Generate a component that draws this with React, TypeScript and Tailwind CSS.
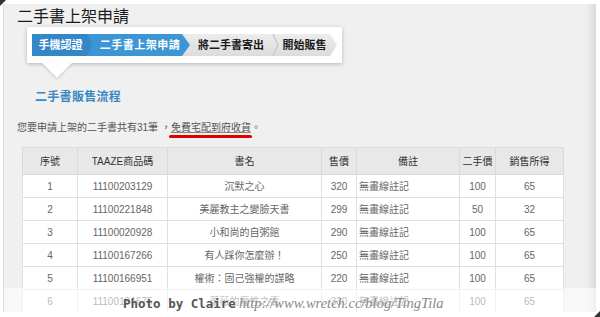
const rows = [
  { no: 1, code: '11100203129', title: '沉默之心', price: 320, note: '無畫線註記', used: 100, income: 65 },
  { no: 2, code: '11100221848', title: '美麗教主之變臉天書', price: 299, note: '無畫線註記', used: 50, income: 32 },
  { no: 3, code: '11100020928', title: '小和尚的自粥館', price: 290, note: '無畫線註記', used: 100, income: 65 },
  { no: 4, code: '11100167266', title: '有人踩你怎麼辦！', price: 250, note: '無畫線註記', used: 100, income: 65 },
  { no: 5, code: '11100166951', title: '權術：固己強權的謀略', price: 220, note: '無畫線註記', used: 100, income: 65 },
  { no: 6, code: '11100194675', title: '薔薇的魔性之毒', price: 330, note: '無畫線註記', used: 100, income: 65 },
]

const font = { fontFamily: '"Liberation Sans", "Noto Sans CJK TC", sans-serif' }

export default function App() {
  return (
    <div className="relative w-[600px] h-[317px] overflow-hidden bg-white" style={font}>
      {/* photo frame corners */}
      <div className="absolute left-0 top-0 w-0 h-0 border-t-[6px] border-r-[6px] border-t-[#333] border-r-transparent z-20" />
      <div className="absolute right-0 bottom-0 w-0 h-0 border-b-[6px] border-l-[6px] border-b-[#333] border-l-transparent z-20" />

      <div className="relative ml-[3px] mt-[4px] w-[593px] h-[308px] overflow-hidden bg-[#f0f0f0] border-l border-[#dcdcdc]">
        {/* right edge shade */}
        <div className="absolute right-0 top-0 bottom-0 w-[10px] bg-gradient-to-r from-[#f0f0f0] to-[#dadada]" />

        <div className="mt-[2px] ml-[13px] h-[21px] leading-[21px] text-[16px] text-[#1a1a1a]">二手書上架申請</div>

        {/* steps card */}
        <div className="relative ml-[23px] w-[315px] h-[36px] bg-white px-[5px] pt-[7px] shadow-[0_1px_4px_rgba(0,0,0,0.25)]">
          <div className="flex h-[22px] w-[305px] bg-gradient-to-b from-[#ececec] to-[#dcdcdc] [clip-path:polygon(0_0,calc(100%_-_7px)_0,100%_50%,calc(100%_-_7px)_100%,0_100%)]">
            <div className="flex w-[158px] bg-[#3c95d4] [clip-path:polygon(0_0,calc(100%_-_8px)_0,100%_50%,calc(100%_-_8px)_100%,0_100%)]">
              <div className="w-[60px] h-full bg-[#3487c7] flex items-center justify-center pr-[3px] text-[11px] font-bold text-white [clip-path:polygon(0_0,calc(100%_-_5px)_0,100%_50%,calc(100%_-_5px)_100%,0_100%)]">
                手機認證
              </div>
              <div className="flex-1 flex items-center justify-center pr-[2px] text-[11px] font-bold text-white tracking-[0.5px]">
                二手書上架申請
              </div>
            </div>
            <div className="w-[82px] flex items-center justify-center text-[11px] font-bold text-[#1a1a1a]">將二手書寄出</div>
            <svg width="7" height="22" viewBox="0 0 7 22" className="shrink-0">
              <polyline points="1,0 6,11 1,22" fill="none" stroke="#bdbdbd" strokeWidth="1" />
            </svg>
            <div className="flex-1 flex items-center justify-center pr-[7px] text-[11px] font-bold text-[#1a1a1a]">開始販售</div>
          </div>
          <svg width="30" height="17" viewBox="0 0 30 17" className="absolute left-[15px] top-full drop-shadow-[0_1px_1px_rgba(0,0,0,0.2)]">
            <polygon points="0,0 30,0 15,15" fill="white" />
          </svg>
        </div>

        <div className="mt-[26px] ml-[31px] h-[16px] leading-[16px] text-[12px] font-bold tracking-[0.3px] text-[#3a88c2]">二手書販售流程</div>

        <div className="mt-[16px] ml-[13px] h-[14px] leading-[14px] text-[10px] text-[#555]">
          您要申請上架的二手書共有31筆 ，
          <span className="relative underline decoration-[#888]">
            免費宅配到府收貨
            <span className="absolute left-[-2px] right-[-1px] bottom-[-5px] h-[3px] rounded-full bg-[#e00000]" />
          </span>
          。
        </div>

        <table className="mt-[12px] ml-[18px] w-[541px] table-fixed border-collapse text-[10px]">
          <colgroup>
            <col className="w-[55px]" />
            <col className="w-[90px]" />
            <col className="w-[154px]" />
            <col className="w-[35px]" />
            <col className="w-[103px]" />
            <col className="w-[36px]" />
            <col className="w-[68px]" />
          </colgroup>
          <thead>
            <tr className="h-[27px] bg-[#e8e8e8] text-[#333]">
              {['序號', 'TAAZE商品碼', '書名', '售價', '備註', '二手價', '銷售所得'].map((h) => (
                <th key={h} className="border border-[#dadada] font-normal text-center">{h}</th>
              ))}
            </tr>
          </thead>
          <tbody>
            {rows.map((r) => (
              <tr key={r.no} className="h-[23px] bg-white text-[#666]">
                <td className="border border-[#e0e0e0] text-center">{r.no}</td>
                <td className="border border-[#e0e0e0] text-center">{r.code}</td>
                <td className="border border-[#e0e0e0] text-center">{r.title}</td>
                <td className="border border-[#e0e0e0] text-center">{r.price}</td>
                <td className="border border-[#e0e0e0] pl-[2px] text-left">{r.note}</td>
                <td className="border border-[#e0e0e0] text-center">{r.used}</td>
                <td className="border border-[#e0e0e0] text-center">{r.income}</td>
              </tr>
            ))}
          </tbody>
        </table>

        {/* watermark band */}
        <div className="absolute left-0 right-0 top-[284px] bottom-0 bg-white/55" />
      </div>

      {/* watermark */}
      <div className="absolute left-[123px] top-[293px] flex items-baseline z-10 whitespace-nowrap">
        <span className="text-[12.5px] font-bold text-[#555] [text-shadow:0_0_1px_#fff]" style={{ fontFamily: '"DejaVu Sans Mono", monospace' }}>
          Photo by Claire
        </span>
        <span className="ml-[3px] text-[14.5px] italic text-[#8a8a8a]" style={{ fontFamily: '"Liberation Serif", serif' }}>
          http://www.wretch.cc/blog/TingTila
        </span>
      </div>
    </div>
  )
}
